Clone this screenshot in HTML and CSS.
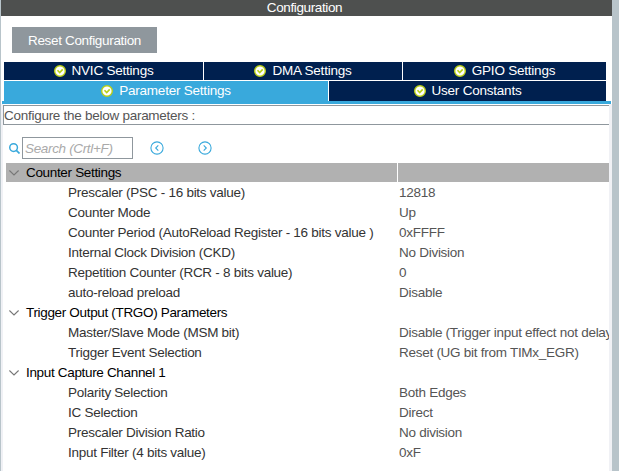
FILE: index.html
```html
<!DOCTYPE html>
<html lang="en">
<head>
<meta charset="utf-8">
<title>Configuration</title>
<link rel="stylesheet" href="styles.css">
</head>
<body>
<svg width="0" height="0" class="defs">
  <symbol id="check" viewBox="0 0 12 12"><circle cx="6" cy="6" r="5.3" fill="#fff" stroke="#b9cf16" stroke-width="1.4"/><path d="M3.5 5.3 5.7 7.5 8.7 4.4" fill="none" stroke="#b9cf16" stroke-width="1.6"/></symbol>
  <symbol id="chev" viewBox="0 0 10 6"><path d="M.4.5 5 5 9.6.5" fill="none" stroke="#777" stroke-width="1.1"/></symbol>
</svg>
<div class="window">
  <header class="title">Configuration</header>
  <div class="toolbar"><button class="reset">Reset Configuration</button></div>
  <nav class="tabs">
    <div class="tab-row top">
      <div class="tab"><svg><use href="#check"/></svg><span>NVIC Settings</span></div>
      <div class="tab"><svg><use href="#check"/></svg><span>DMA Settings</span></div>
      <div class="tab"><svg><use href="#check"/></svg><span>GPIO Settings</span></div>
    </div>
    <div class="tab-row bottom">
      <div class="tab active"><svg><use href="#check"/></svg><span>Parameter Settings</span></div>
      <div class="tab"><svg><use href="#check"/></svg><span>User Constants</span></div>
    </div>
  </nav>
  <main class="panel">
    <div class="hint">Configure the below parameters :</div>
    <div class="search">
      <svg class="lens" viewBox="0 0 12 12"><circle cx="5" cy="5" r="4.2" fill="none" stroke="#39a9dc" stroke-width="1.6"/><path d="M8 8 11.5 11.5" stroke="#39a9dc" stroke-width="1.8"/></svg>
      <div class="field">Search (Crtl+F)</div>
      <svg class="arrow prev" viewBox="0 0 14 14"><circle cx="7" cy="7" r="6.1"/><path d="M8.3 4.3 5.7 7 8.3 9.7"/></svg>
      <svg class="arrow next" viewBox="0 0 14 14"><circle cx="7" cy="7" r="6.1"/><path d="M5.7 4.3 8.3 7 5.7 9.7"/></svg>
    </div>
    <div class="tree">
      <div class="group selected"><div class="name"><svg><use href="#chev"/></svg><span>Counter Settings</span></div><div class="cell"></div></div>
      <div class="row"><span>Prescaler (PSC - 16 bits value)</span><span class="value">12818</span></div>
      <div class="row"><span>Counter Mode</span><span class="value">Up</span></div>
      <div class="row"><span>Counter Period (AutoReload Register - 16 bits value )</span><span class="value">0xFFFF</span></div>
      <div class="row"><span>Internal Clock Division (CKD)</span><span class="value">No Division</span></div>
      <div class="row"><span>Repetition Counter (RCR - 8 bits value)</span><span class="value">0</span></div>
      <div class="row"><span>auto-reload preload</span><span class="value">Disable</span></div>
      <div class="group"><div class="name"><svg><use href="#chev"/></svg><span>Trigger Output (TRGO) Parameters</span></div></div>
      <div class="row"><span>Master/Slave Mode (MSM bit)</span><span class="value">Disable (Trigger input effect not delayed)</span></div>
      <div class="row"><span>Trigger Event Selection</span><span class="value">Reset (UG bit from TIMx_EGR)</span></div>
      <div class="group"><div class="name"><svg><use href="#chev"/></svg><span>Input Capture Channel 1</span></div></div>
      <div class="row"><span>Polarity Selection</span><span class="value">Both Edges</span></div>
      <div class="row"><span>IC Selection</span><span class="value">Direct</span></div>
      <div class="row"><span>Prescaler Division Ratio</span><span class="value">No division</span></div>
      <div class="row"><span>Input Filter (4 bits value)</span><span class="value">0xF</span></div>
    </div>
  </main>
</div>
</body>
</html>
```
FILE: styles.css
```css
* { box-sizing: border-box; }
body { margin: 0; background: #fff; font: 13.5px/20px "Liberation Sans", Arial, sans-serif; letter-spacing: -.27px; overflow: hidden; }
.defs { display: block; width: 0; height: 0; }
.window { height: 471px; border-left: 1px solid #b8c4ca; border-right: 7px solid #b8c4ca; overflow: hidden; }
.title { height: 16px; line-height: 15px; background: #4e504f; color: #fff; text-align: center; padding-right: 4px; letter-spacing: -.38px; }
.toolbar { height: 46px; padding: 11px 0 0 11px; }
.reset { display: block; width: 145px; height: 26px; padding: 2px 0 0; border: 0; background: #8f979d; color: #fff; font: inherit; letter-spacing: -.33px; }
.tabs { height: 42px; margin: 0 1px; padding: 0 4px 0 2px; border-bottom: 3px solid #39a9dc; }
.tab-row { display: grid; column-gap: 1px; }
.top { grid-template-columns: 199px 198px 203px; height: 18px; margin-bottom: 1px; }
.bottom { grid-template-columns: 324px 277px; height: 20px; }
.tab { display: flex; align-items: center; justify-content: center; gap: 6px; background: #00204f; color: #fff; line-height: 18px; letter-spacing: -.22px; }
.bottom .tab { padding-bottom: 1px; }
.tab svg { width: 12px; height: 12px; }
.active { background: #39a9dc; }
.panel { height: 367px; padding-top: 1px; border-left: 2px solid #f0f1f5; border-right: 3px solid #f0f1f5; }
.hint { height: 20px; line-height: 20px; border: 1px solid #8f979d; border-right: 0; color: #555; }
.search { display: flex; align-items: center; height: 22px; margin: 12px 0 4px 6px; }
.lens { width: 11px; height: 11px; margin-right: 2px; }
.field { width: 111px; height: 22px; padding-left: 2px; border: 1px solid #8f979d; color: #aaa; font-style: italic; letter-spacing: -.34px; line-height: 21px; }
.arrow { width: 14px; height: 14px; fill: none; stroke: #39a9dc; stroke-width: 1.1; }
.prev { margin-left: 17px; }
.next { margin-left: 34px; }
.tree { margin-left: 3px; color: #333; }
.group, .row { display: grid; grid-template-columns: 391px 1fr; column-gap: 1px; height: 20px; white-space: nowrap; }
.name { display: flex; align-items: center; height: 19px; padding-left: 3px; color: #000; letter-spacing: -.33px; }
.name svg { width: 10px; height: 6px; margin-right: 7px; }
.selected .name, .selected .cell { height: 19px; background: #b1b1b1; }
.row { padding-left: 62px; grid-template-columns: 330px 1fr; line-height: 19px; }
.value { color: #555; overflow: hidden; min-width: 0; }
```
